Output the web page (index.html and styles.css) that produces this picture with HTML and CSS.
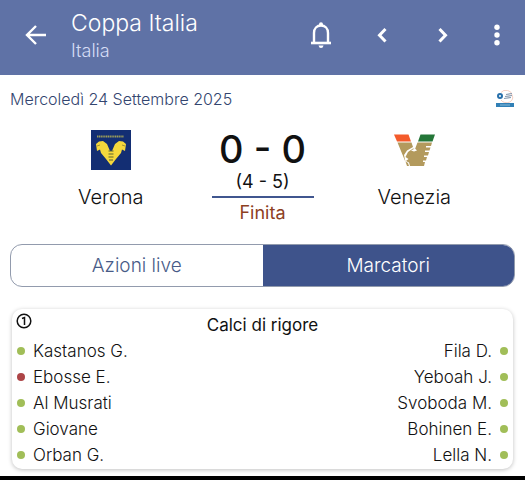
FILE: index.html
```html
<!DOCTYPE html>
<html lang="it">
<head>
    <meta charset="UTF-8">
    <meta name="viewport" content="width=device-width, initial-scale=1.0">
    <title>Coppa Italia - Verona Venezia</title>
    <link rel="stylesheet" href="styles.css">
</head>
<body>
    <header class="topbar">
        <button class="icon-btn back" aria-label="Indietro">
            <svg width="22" height="22" viewBox="0 0 22 22" fill="none" stroke="#fff" stroke-width="2.400">
                <path d="M21 10H2M11 1L2 10L11 19"/>
            </svg>
        </button>
        <div class="titles">
            <h1>Coppa Italia</h1>
            <p>Italia</p>
        </div>
        <div class="actions">
            <button class="icon-btn" aria-label="Notifiche">
                <svg width="22" height="28" viewBox="0 0 22 28" fill="none" stroke="#fff" stroke-width="2.400">
                    <path d="M4 21V11C4 6.500 7 3.500 11 3.500S18 6.500 18 11V21"/>
                    <path d="M1 21H21" stroke-width="2.600"/>
                    <circle cx="11" cy="2.200" r="2" fill="#fff" stroke="none"/>
                    <path d="M8.500 23.500H13.500Q13 26 11 26T8.500 23.500Z" fill="#fff" stroke="none"/>
                </svg>
            </button>
            <button class="icon-btn" aria-label="Precedente">
                <svg width="10" height="18" viewBox="0 0 10 18" fill="none" stroke="#fff" stroke-width="3">
                    <path d="M8.500 2L2.500 8.200L8.500 14.500"/>
                </svg>
            </button>
            <button class="icon-btn" aria-label="Successiva">
                <svg width="10" height="18" viewBox="0 0 10 18" fill="none" stroke="#fff" stroke-width="3">
                    <path d="M1.500 2L7.500 8.200L1.500 14.500"/>
                </svg>
            </button>
            <button class="icon-btn more" aria-label="Altro">
                <svg width="6" height="24" viewBox="0 0 6 24" fill="#fff">
                    <circle cx="3" cy="3.200" r="2.700"/>
                    <circle cx="3" cy="11" r="2.700"/>
                    <circle cx="3" cy="18.800" r="2.700"/>
                </svg>
            </button>
        </div>
    </header>

    <main class="content">
        <div class="date-row">
            <span>Mercoledì 24 Settembre 2025</span>
            <svg width="20" height="18" viewBox="0 0 20 18">
                <path d="M6 2.500A6 5 0 0 1 17 5A6 5 0 0 1 6 10" fill="none" stroke="#f2c4b4" stroke-width=".8"/>
                <circle cx="5" cy="6" r="2" fill="#fff" stroke="#2870ab" stroke-width="2"/>
                <path d="M11 4.500L17 3.500M10 6.500L17 5.500M9 8.500L16 7.500" stroke="#8799ae" stroke-width="1.200"/>
                <rect x="1" y="13" width="18" height="4" fill="#3180b6"/>
                <path d="M5 15H15" stroke="#8abbd8" stroke-width="1"/>
            </svg>
        </div>

        <section class="match">
            <div class="team">
                <svg width="42" height="42" viewBox="0 0 42 42">
                    <rect x="1" y="1" width="40" height="40" fill="#132e73"/>
                    <path d="M7 7.500H34" stroke="#9c9d59" stroke-width="1.800" stroke-dasharray="1.300 .5"/>
                    <path d="M6 15L9 12.500L13 12L17 15L20 22H22L25 15L29 12L33 12.500L36 15L35 22L32 20.500L31 24L26 30L21 36.500L16 30L11 24L10 20.500L7 22Z" fill="#f5d83c"/>
                    <path d="M18.500 22H23.500M18.500 25H23.500M18.500 28H23.500M19 31H23" stroke="#5b632f" stroke-width="1.200"/>
                    <path d="M7 17L10 16M35 17L32 16" stroke="#a29335" stroke-width="1"/>
                </svg>
                <span class="name">Verona</span>
            </div>
            <div class="score">
                <strong class="goals">0 - 0</strong>
                <span class="penalties">(4 - 5)</span>
                <span class="status">Finita</span>
            </div>
            <div class="team">
                <svg width="42" height="42" viewBox="0 0 42 42">
                    <path d="M1 5.500H15.500L18 12.500H4Z" fill="#f45b2b"/>
                    <path d="M27.500 5.500H42L39.500 12.500H25Z" fill="#247638"/>
                    <path d="M4.500 13.500H18.500L20 18L14 21.500L11 26L12.500 33Z" fill="#b39a5d"/>
                    <path d="M24.500 13.500H39L38 17H33V18.500H37.500L36.500 21.500H32V23H36L35 26.500H31V28H34L33 31.500H30V33H32L31 37H17L16 33.500L13 32L15.500 30L12.500 28L15 23L20 19.500L22 20Z" fill="#b39a5d"/>
                    <path d="M18 21.500L22 19.500L24 21.500L21 22.500Z" fill="#fff"/>
                    <path d="M12.500 32.500L15 34L16 37H14Z" fill="#b39a5d"/>
                </svg>
                <span class="name">Venezia</span>
            </div>
        </section>

        <nav class="tabs">
            <button class="tab">Azioni live</button>
            <button class="tab active">Marcatori</button>
        </nav>

        <section class="card">
            <svg class="period" width="16" height="16" viewBox="0 0 16 16" fill="none" stroke="#111" stroke-width="1.500">
                <circle cx="8" cy="8" r="6.800"/>
                <path d="M6 5.500L8.500 4.500V12"/>
            </svg>
            <h2>Calci di rigore</h2>
            <div class="shootout">
                <ul class="takers">
                    <li>Kastanos G.</li>
                    <li class="missed">Ebosse E.</li>
                    <li>Al Musrati</li>
                    <li>Giovane</li>
                    <li>Orban G.</li>
                </ul>
                <ul class="takers away">
                    <li>Fila D.</li>
                    <li>Yeboah J.</li>
                    <li>Svoboda M.</li>
                    <li>Bohinen E.</li>
                    <li>Lella N.</li>
                </ul>
            </div>
        </section>
    </main>
    <footer class="bottom-edge"></footer>
</body>
</html>
```
FILE: styles.css
```css
* {
    box-sizing: border-box;
}
body {
    margin: 0;
    min-height: 100vh;
    display: flex;
    flex-direction: column;
    font-family: Inter, sans-serif;
    font-size: 17px;
    font-weight: 300;
    color: #111;
    background: #fff;
}
h1, h2, p, ul {
    margin: 0;
    padding: 0;
    font-weight: 300;
}
button {
    font: inherit;
    border: none;
    background: none;
    cursor: pointer;
}
.topbar {
    display: flex;
    align-items: center;
    padding: 8px 12px 12px;
    background: #5f72a6;
    color: #fff;
}
.icon-btn {
    display: flex;
    align-items: center;
    justify-content: center;
    width: 61px;
    height: 48px;
    padding: 0;
}
.back {
    width: 48px;
}
.titles {
    flex: 1;
    padding-left: 11px;
}
.titles h1 {
    font-size: 23px;
    line-height: 30px;
}
.titles p {
    font-size: 18px;
    line-height: 25px;
    color: #d5dcf5;
}
.actions {
    display: flex;
}
.more {
    width: 48px;
    margin-right: -8px;
}
.content {
    flex: 1;
    padding: 14px 10px 7px;
}
.date-row {
    display: flex;
    justify-content: space-between;
    align-items: center;
    font-size: 16px;
    line-height: 20px;
    color: #33456f;
}
.match {
    display: grid;
    grid-template-columns: 1fr 102px 1fr;
    align-items: start;
    padding-top: 20px;
}
.team {
    display: flex;
    flex-direction: column;
    align-items: center;
    gap: 12px;
}
.name {
    font-size: 20px;
    line-height: 28px;
}
.score {
    display: flex;
    flex-direction: column;
    text-align: center;
}
.goals {
    font-size: 38px;
    line-height: 40px;
    font-weight: 500;
    white-space: nowrap;
}
.penalties {
    font-size: 18px;
    line-height: 25px;
    font-weight: 400;
    border-bottom: 2px solid #40568f;
    padding-bottom: 2px;
}
.status {
    font-size: 18px;
    line-height: 29px;
    font-weight: 400;
    color: #8d401f;
}
.tabs {
    display: flex;
    margin-top: 17px;
    border: 1px solid #929bad;
    border-radius: 12px;
    overflow: hidden;
}
.tab {
    flex: 1;
    padding: 0;
    font-size: 19px;
    line-height: 41px;
    color: #485b87;
}
.tab.active {
    background: #3e538b;
    color: #fff;
}
.card {
    position: relative;
    margin: 22px 2px 0;
    padding: 3px 5px 1px;
    border-radius: 10px;
    box-shadow: 0 1px 4px rgba(0, 0, 0, 0.25);
}
.period {
    position: absolute;
    top: 4px;
    left: 4px;
}
.card h2 {
    font-size: 17px;
    line-height: 26px;
    font-weight: 400;
    text-align: center;
}
.shootout {
    display: flex;
    justify-content: space-between;
}
.takers {
    list-style: none;
}
.takers li {
    display: flex;
    align-items: center;
    gap: 8px;
    line-height: 26px;
}
.takers li::before {
    content: "";
    width: 8px;
    height: 8px;
    border-radius: 50%;
    background: #a1be58;
}
.takers .missed::before {
    background: #ad4547;
}
.away li {
    flex-direction: row-reverse;
}
.bottom-edge {
    height: 4px;
    background: #000;
}
```
